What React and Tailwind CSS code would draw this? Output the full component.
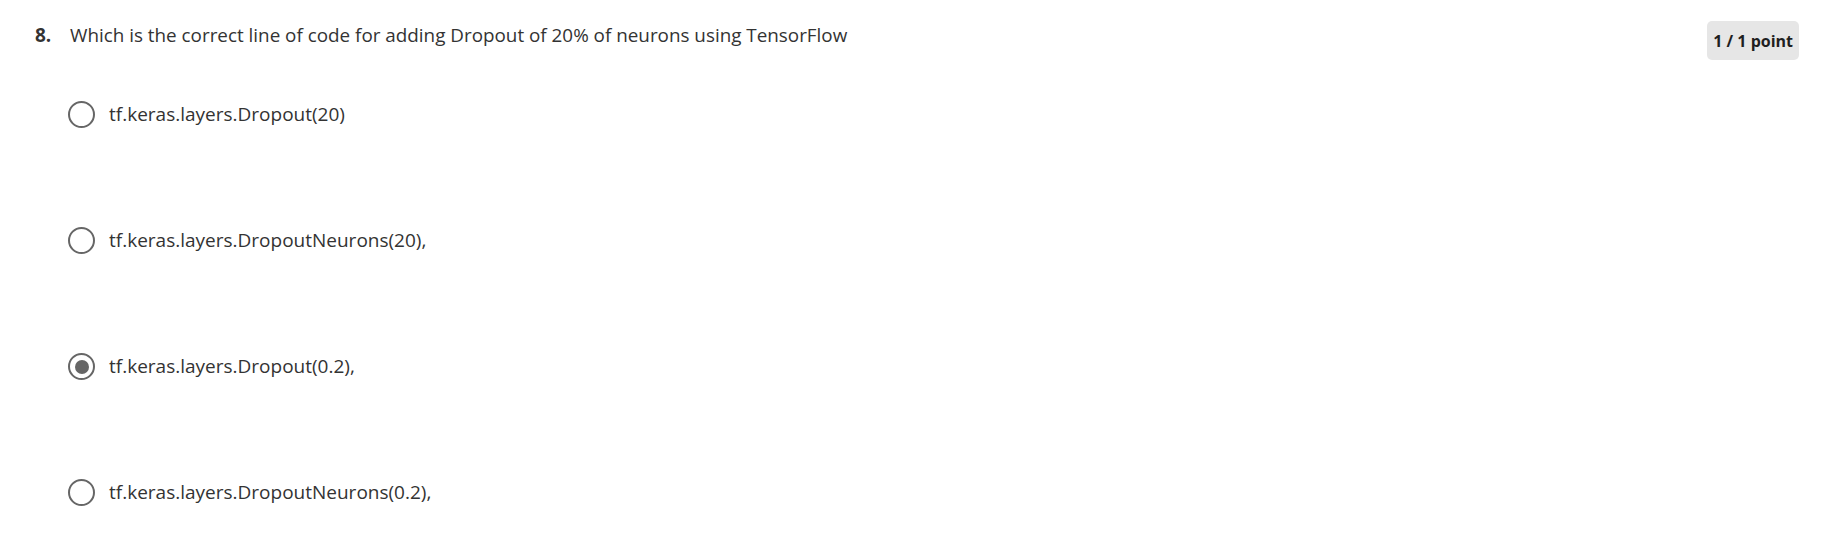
import React from "react";

const options = [
  { label: "tf.keras.layers.Dropout(20)", checked: false },
  { label: "tf.keras.layers.DropoutNeurons(20),", checked: false },
  { label: "tf.keras.layers.Dropout(0.2),", checked: true },
  { label: "tf.keras.layers.DropoutNeurons(0.2),", checked: false },
];

function Radio({ checked }) {
  return (
    <span className="flex h-[27px] w-[27px] shrink-0 items-center justify-center rounded-full border-[2.5px] border-[#666666] bg-white">
      {checked ? <span className="h-[14px] w-[14px] rounded-full bg-[#666666]" /> : null}
    </span>
  );
}

export default function App() {
  return (
    <div className="min-h-[535px] w-[1837px] bg-white pl-[35px] pr-[38px] pt-[21px] text-[#333333] [font-family:'Open_Sans',sans-serif]">
      <div className="flex items-start justify-between">
        <div className="flex items-baseline">
          <span className="w-[35px] text-[19px] font-bold text-[#333333]">8.</span>
          <span className="text-[18.85px] leading-[28px]">
            Which is the correct line of code for adding Dropout of 20% of neurons using TensorFlow
          </span>
        </div>
        <span className="flex h-[39px] items-center rounded-[5px] bg-[#e6e6e6] px-[6px] text-[16px] font-bold text-[#1f1f1f]">
          1 / 1 point
        </span>
      </div>

      <div className="mt-[41px] flex flex-col gap-[99px] pl-[33px]">
        {options.map((opt) => (
          <label key={opt.label} className="flex items-center gap-[14px]">
            <Radio checked={opt.checked} />
            <span className="text-[19px] leading-[27px]">{opt.label}</span>
          </label>
        ))}
      </div>
    </div>
  );
}
